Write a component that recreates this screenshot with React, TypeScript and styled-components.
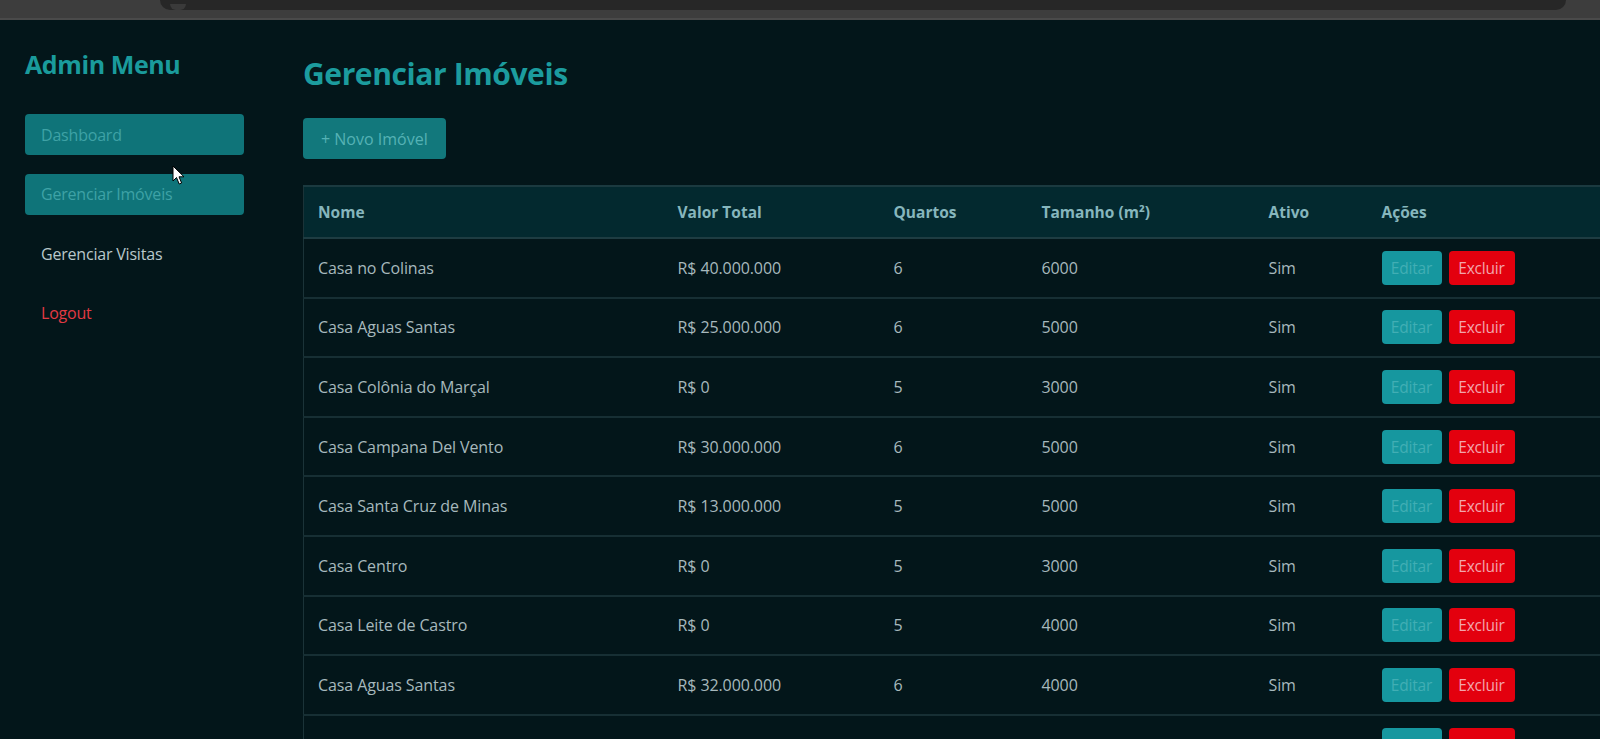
import React from "react";
import styled, { createGlobalStyle } from "styled-components";

const GlobalStyle = createGlobalStyle`
  html, body {
    margin: 0;
    padding: 0;
    background: #03161a;
    overflow: hidden;
    font-family: "Open Sans", "Noto Sans", sans-serif;
  }
  * { box-sizing: border-box; }
`;

const Page = styled.div`
  width: 1600px;
  height: 739px;
  display: flex;
  flex-direction: column;
  background: #03161a;
  position: relative;
  overflow: hidden;
`;

const BrowserStrip = styled.div`
  height: 20px;
  flex: 0 0 20px;
  background: #3d3d3d;
  border-bottom: 2px solid #4a4a4a;
  display: flex;
  padding-left: 160px;
  padding-right: 34px;
`;

const UrlBar = styled.div`
  flex: 1;
  height: 10px;
  background: #272727;
  border-radius: 0 0 12px 12px;
  display: flex;
  align-items: flex-end;
  padding-left: 10px;
`;

const UrlDot = styled.div`
  width: 16px;
  height: 6px;
  border-radius: 0 0 8px 8px;
  background: #3a3a3a;
`;

const Layout = styled.div`
  flex: 1;
  display: flex;
`;

const Sidebar = styled.aside`
  flex: 0 0 244px;
  padding: 28px 0 0 25px;
  display: flex;
  flex-direction: column;
`;

const SideTitle = styled.h2`
  margin: 0 0 34px 0;
  font-size: 25px;
  line-height: 32px;
  font-weight: 700;
  color: #1a9b9c;
  letter-spacing: -0.4px;
`;

const NavList = styled.nav`
  display: flex;
  flex-direction: column;
  gap: 18.5px;
`;

const NavItem = styled.a<{ $variant?: "button" | "plain" | "danger" }>`
  height: 41px;
  display: flex;
  align-items: center;
  padding: 0 16px;
  border-radius: 4px;
  font-size: 16px;
  letter-spacing: -0.2px;
  text-decoration: none;
  background: ${(p) => (p.$variant === "button" ? "#0f7479" : "transparent")};
  color: ${(p) =>
    p.$variant === "button" ? "#3ea2a6" : p.$variant === "danger" ? "#e23a43" : "#b9c8cb"};
`;

const Main = styled.main`
  flex: 1;
  padding: 36px 0 0 59px;
  display: flex;
  flex-direction: column;
  align-items: flex-start;
`;

const Title = styled.h1`
  margin: 0 0 26px 0;
  font-size: 30px;
  line-height: 36px;
  font-weight: 700;
  color: #1c9c9e;
  letter-spacing: -0.4px;
`;

const NewButton = styled.button`
  height: 41px;
  padding: 0 18px;
  border: none;
  border-radius: 4px;
  background: #12787c;
  color: #55b2b5;
  font-family: inherit;
  font-size: 16px;
  margin-bottom: 26px;
`;

const Table = styled.table`
  width: 1330px;
  table-layout: fixed;
  border-collapse: collapse;
  border-left: 1px solid #1b3338;
`;

const HeadRow = styled.tr`
  background: #03292f;
  border-top: 2px solid #1b3a40;
  border-bottom: 2px solid #1e3c42;
`;

const Th = styled.th`
  height: 52px;
  padding: 0 14px;
  text-align: left;
  font-size: 15.5px;
  font-weight: 700;
  color: #86b6bd;
`;

const Row = styled.tr`
  border-bottom: 2px solid #172f34;
`;

const Td = styled.td`
  height: 59.6px;
  padding: 0 14px;
  font-size: 16px;
  letter-spacing: -0.1px;
  color: #a7b9bd;
  white-space: nowrap;
`;

const Actions = styled.div`
  display: flex;
  gap: 7px;
`;

const ActionButton = styled.button<{ $kind: "edit" | "delete" }>`
  height: 34px;
  padding: 0 4px;
  width: ${(p) => (p.$kind === "edit" ? "60px" : "66px")};
  border: none;
  border-radius: 4px;
  font-family: inherit;
  font-size: 15.5px;
  letter-spacing: -0.2px;
  background: ${(p) => (p.$kind === "edit" ? "#16979f" : "#e3000e")};
  color: ${(p) => (p.$kind === "edit" ? "#41aeb4" : "#f2a5ad")};
`;

const Cursor = styled.svg`
  position: absolute;
  left: 172px;
  top: 165px;
`;

type Imovel = {
  nome: string;
  valor: string;
  quartos: number;
  tamanho: number;
  ativo: string;
};

const imoveis: Imovel[] = [
  { nome: "Casa no Colinas", valor: "R$ 40.000.000", quartos: 6, tamanho: 6000, ativo: "Sim" },
  { nome: "Casa Aguas Santas", valor: "R$ 25.000.000", quartos: 6, tamanho: 5000, ativo: "Sim" },
  { nome: "Casa Colônia do Marçal", valor: "R$ 0", quartos: 5, tamanho: 3000, ativo: "Sim" },
  { nome: "Casa Campana Del Vento", valor: "R$ 30.000.000", quartos: 6, tamanho: 5000, ativo: "Sim" },
  { nome: "Casa Santa Cruz de Minas", valor: "R$ 13.000.000", quartos: 5, tamanho: 5000, ativo: "Sim" },
  { nome: "Casa Centro", valor: "R$ 0", quartos: 5, tamanho: 3000, ativo: "Sim" },
  { nome: "Casa Leite de Castro", valor: "R$ 0", quartos: 5, tamanho: 4000, ativo: "Sim" },
  { nome: "Casa Aguas Santas", valor: "R$ 32.000.000", quartos: 6, tamanho: 4000, ativo: "Sim" },
  { nome: "Casa Matozinhos", valor: "R$ 0", quartos: 4, tamanho: 3000, ativo: "Sim" },
];

const colWidths = [360, 216, 148, 227, 113, 266];

export default function App() {
  return (
    <Page>
      <GlobalStyle />
      <BrowserStrip>
        <UrlBar>
          <UrlDot />
        </UrlBar>
      </BrowserStrip>
      <Layout>
        <Sidebar>
          <SideTitle>Admin Menu</SideTitle>
          <NavList>
            <NavItem $variant="button">Dashboard</NavItem>
            <NavItem $variant="button">Gerenciar Imóveis</NavItem>
            <NavItem $variant="plain">Gerenciar Visitas</NavItem>
            <NavItem $variant="danger">Logout</NavItem>
          </NavList>
        </Sidebar>
        <Main>
          <Title>Gerenciar Imóveis</Title>
          <NewButton>+ Novo Imóvel</NewButton>
          <Table>
            <colgroup>
              {colWidths.map((w, i) => (
                <col key={i} style={{ width: w }} />
              ))}
            </colgroup>
            <thead>
              <HeadRow>
                <Th>Nome</Th>
                <Th>Valor Total</Th>
                <Th>Quartos</Th>
                <Th>Tamanho (m²)</Th>
                <Th>Ativo</Th>
                <Th>Ações</Th>
              </HeadRow>
            </thead>
            <tbody>
              {imoveis.map((im, i) => (
                <Row key={i}>
                  <Td>{im.nome}</Td>
                  <Td>{im.valor}</Td>
                  <Td>{im.quartos}</Td>
                  <Td>{im.tamanho}</Td>
                  <Td>{im.ativo}</Td>
                  <Td>
                    <Actions>
                      <ActionButton $kind="edit">Editar</ActionButton>
                      <ActionButton $kind="delete">Excluir</ActionButton>
                    </Actions>
                  </Td>
                </Row>
              ))}
            </tbody>
          </Table>
        </Main>
      </Layout>
      <Cursor width="14" height="21" viewBox="0 0 14 21">
        <path
          d="M1 1 L1 16 L4.5 12.5 L7.2 19 L9.6 18 L7 11.8 L12 11.8 Z"
          fill="#ffffff"
          stroke="#000000"
          strokeWidth="1"
          strokeLinejoin="round"
        />
      </Cursor>
    </Page>
  );
}
